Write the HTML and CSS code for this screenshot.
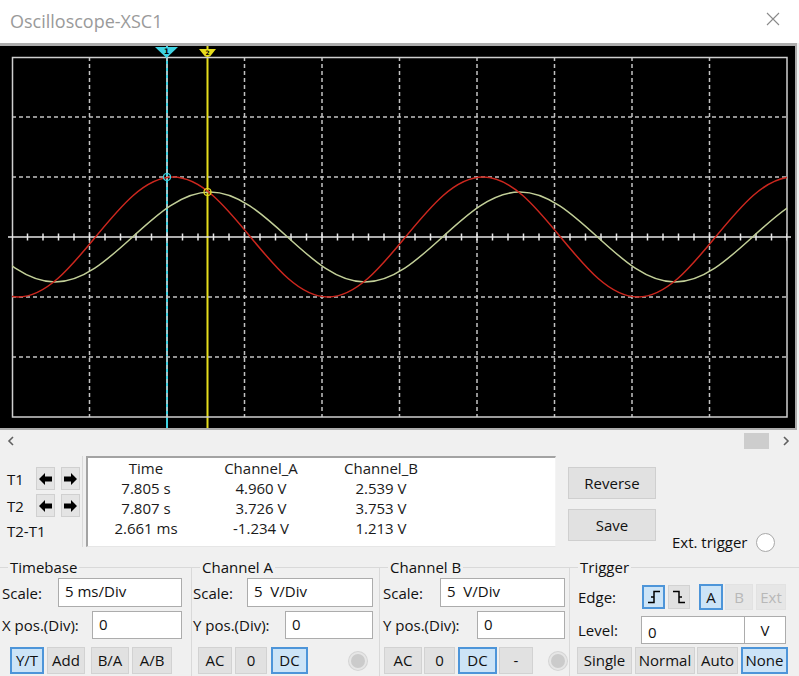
FILE: index.html
```html
<!DOCTYPE html>
<html>
<head>
<meta charset="utf-8">
<title>Oscilloscope-XSC1</title>
<link rel="stylesheet" href="styles.css">
</head>
<body>
<header class="titlebar">
  <span class="title">Oscilloscope-XSC1</span>
  <svg class="close" width="14" height="14" viewBox="0 0 14 14"><path d="M1 1L13 13M13 1L1 13" stroke="#8a8a8a" stroke-width="1.1" fill="none"/></svg>
</header>

<svg class="scope" width="799" height="387" viewBox="0 43 799 387">
  <defs><clipPath id="plot"><rect x="12" y="57" width="775" height="360"/></clipPath></defs>
  <rect x="0" y="43" width="799" height="387" fill="#f0f0f0"/>
  <rect x="0" y="43" width="797" height="3" fill="#adadad"/>
  <rect x="0" y="46" width="795" height="382" fill="#000"/>
  <rect x="795" y="43" width="2" height="387" fill="#adadad"/>
  <rect x="0" y="428" width="797" height="2" fill="#adadad"/>
  <line x1="167" y1="46" x2="167" y2="428" stroke="#3ed3e3" stroke-width="2"/>
  <line x1="207.5" y1="46" x2="207.5" y2="428" stroke="#e6dd1c" stroke-width="2"/>
  <g stroke="#c2c2c2" stroke-width="1.5" stroke-dasharray="4 3" fill="none">
    <path d="M89.5 57V417M167 57V417M244.5 57V417M322 57V417M399.5 57V417M477 57V417M554.5 57V417M632 57V417M709.5 57V417"/>
    <path d="M12 117H787M12 177H787M12 297H787M12 357H787"/>
  </g>
  <rect x="12.5" y="57.5" width="774.5" height="359.5" fill="none" stroke="#cfcfcf" stroke-width="1.5"/>
  <line x1="8" y1="237" x2="791" y2="237" stroke="#e6e6e6" stroke-width="1.6"/>
  <line x1="12" y1="237" x2="787" y2="237" stroke="#e6e6e6" stroke-width="7" stroke-dasharray="1.5 14" stroke-dashoffset="0.75"/>
  <g clip-path="url(#plot)" fill="none" stroke-width="1.5">
    <path stroke="#c2cf98" d="M-22.5,237 C2.78,260.05 26.95,282 55,282 C83.05,282 107.22,260.05 132.5,237 C157.78,213.95 181.95,192 210,192 C238.05,192 262.22,213.95 287.5,237 C312.78,260.05 336.95,282 365,282 C393.05,282 417.22,260.05 442.5,237 C467.78,213.95 491.95,192 520,192 C548.05,192 572.22,213.95 597.5,237 C622.78,260.05 646.95,282 675,282 C703.05,282 727.22,260.05 752.5,237 C777.78,213.95 801.95,192 830,192"/>
    <path stroke="#cc271e" d="M-59.5,237 C-34.22,267.74 -10.05,297 18,297 C46.05,297 70.22,267.74 95.5,237 C120.78,206.26 144.95,177 173,177 C201.05,177 225.22,206.26 250.5,237 C275.78,267.74 299.95,297 328,297 C356.05,297 380.22,267.74 405.5,237 C430.78,206.26 454.95,177 483,177 C511.05,177 535.22,206.26 560.5,237 C585.78,267.74 609.95,297 638,297 C666.05,297 690.22,267.74 715.5,237 C740.78,206.26 764.95,177 793,177"/>
  </g>
  <circle cx="167" cy="177" r="3.5" fill="none" stroke="#3ed3e3" stroke-width="1.2"/>
  <circle cx="207.5" cy="192" r="3.5" fill="none" stroke="#e6dd1c" stroke-width="1.2"/>
  <polygon points="155,47 178,47 166.5,58" fill="#3ed3e3"/>
  <text x="166.5" y="54" font-size="7.5" font-weight="bold" text-anchor="middle" fill="#000" font-family="DejaVu Sans, sans-serif">1</text>
  <polygon points="199,49 216,49 210,56.5 205,56.5" fill="#e6dd1c"/>
  <text x="207.5" y="55" font-size="6" font-weight="bold" text-anchor="middle" fill="#000" font-family="DejaVu Sans, sans-serif">2</text>
</svg>

<div class="scrollrow">
  <svg class="chev" width="8" height="10" viewBox="0 0 8 10"><path d="M6 1L2 5L6 9" stroke="#606060" stroke-width="1.6" fill="none"/></svg>
  <div class="spacer"></div>
  <div class="thumb"></div>
  <svg class="chev" width="8" height="10" viewBox="0 0 8 10"><path d="M2 1L6 5L2 9" stroke="#606060" stroke-width="1.6" fill="none"/></svg>
</div>

<div class="cursor-row">
  <div class="tcol">
    <div class="trow">
      <span class="tlabel">T1</span>
      <button class="arrow"><svg width="13" height="12" viewBox="0 0 13 12"><polygon points="0,6 6,0 6,3.5 13,3.5 13,8.5 6,8.5 6,12" fill="#000"/></svg></button>
      <button class="arrow gap"><svg width="13" height="12" viewBox="0 0 13 12"><polygon points="13,6 7,0 7,3.5 0,3.5 0,8.5 7,8.5 7,12" fill="#000"/></svg></button>
    </div>
    <div class="trow">
      <span class="tlabel">T2</span>
      <button class="arrow"><svg width="13" height="12" viewBox="0 0 13 12"><polygon points="0,6 6,0 6,3.5 13,3.5 13,8.5 6,8.5 6,12" fill="#000"/></svg></button>
      <button class="arrow gap"><svg width="13" height="12" viewBox="0 0 13 12"><polygon points="13,6 7,0 7,3.5 0,3.5 0,8.5 7,8.5 7,12" fill="#000"/></svg></button>
    </div>
    <div class="tdiff">T2-T1</div>
  </div>

  <div class="readout">
    <div class="rgrid">
      <span>Time</span><span>Channel_A</span><span>Channel_B</span>
      <span>7.805 s</span><span>4.960 V</span><span>2.539 V</span>
      <span>7.807 s</span><span>3.726 V</span><span>3.753 V</span>
      <span>2.661 ms</span><span>-1.234 V</span><span>1.213 V</span>
    </div>
  </div>

  <div class="actions">
    <button class="btn big">Reverse</button>
    <button class="btn big">Save</button>
  </div>

  <div class="ext">
    <span>Ext. trigger</span>
    <span class="radio-white"></span>
  </div>
</div>

<div class="groups">
  <fieldset class="group g-tb">
    <legend>Timebase</legend>
    <div class="frow r1"><span class="lab">Scale:</span><input class="field" type="text" value="5 ms/Div"></div>
    <div class="frow r2"><span class="lab">X pos.(Div):</span><input class="field" type="text" value="0"></div>
    <div class="frow r3">
      <button class="btn on b1">Y/T</button>
      <button class="btn b2">Add</button>
      <button class="btn b3">B/A</button>
      <button class="btn b4">A/B</button>
    </div>
  </fieldset>

  <fieldset class="group g-a">
    <legend>Channel A</legend>
    <div class="frow r1"><span class="lab">Scale:</span><input class="field" type="text" value="5  V/Div"></div>
    <div class="frow r2"><span class="lab">Y pos.(Div):</span><input class="field" type="text" value="0"></div>
    <div class="frow r3">
      <button class="btn b1">AC</button>
      <button class="btn b2">0</button>
      <button class="btn on b3">DC</button>
      <span class="radio-gray"></span>
    </div>
  </fieldset>

  <fieldset class="group g-b">
    <legend>Channel B</legend>
    <div class="frow r1"><span class="lab">Scale:</span><input class="field" type="text" value="5  V/Div"></div>
    <div class="frow r2"><span class="lab">Y pos.(Div):</span><input class="field" type="text" value="0"></div>
    <div class="frow r3">
      <button class="btn b1">AC</button>
      <button class="btn b2">0</button>
      <button class="btn on b3">DC</button>
      <button class="btn b4">-</button>
      <span class="radio-gray"></span>
    </div>
  </fieldset>

  <fieldset class="group g-tr">
    <legend>Trigger</legend>
    <div class="frow t1">
      <span class="lab">Edge:</span>
      <button class="btn on edge e1"><svg width="16" height="16" viewBox="0 0 16 16"><path d="M2 13.5H8V2.5H14M5 8H8" stroke="#000" stroke-width="1.5" fill="none"/></svg></button>
      <button class="btn edge e2"><svg width="16" height="16" viewBox="0 0 16 16"><path d="M2 2.5H8V13.5H14M8 8H11" stroke="#000" stroke-width="1.5" fill="none"/></svg></button>
      <button class="btn on src s1">A</button>
      <button class="btn off src s2">B</button>
      <button class="btn off src s3">Ext</button>
    </div>
    <div class="frow t2">
      <span class="lab">Level:</span>
      <input class="field level" type="text" value="0">
      <input class="field unit" type="text" value="V">
    </div>
    <div class="frow t3">
      <button class="btn m1">Single</button>
      <button class="btn m2">Normal</button>
      <button class="btn m3">Auto</button>
      <button class="btn on m4">None</button>
    </div>
  </fieldset>
</div>
</body>
</html>
```

FILE: styles.css
```css
* { box-sizing: border-box; }
html, body { margin: 0; padding: 0; }
body {
  width: 799px;
  height: 676px;
  overflow: hidden;
  background: #f0f0f0;
  font-family: "Open Sans", "Noto Sans", sans-serif;
  font-size: 15px;
  color: #111;
}

/* title bar */
.titlebar {
  height: 43px;
  background: #fff;
  display: flex;
  align-items: center;
  justify-content: space-between;
  padding: 0 19px 2px 10px;
}
.title { font-size: 18px; line-height: 24px; color: #9a9a9a; }
.close { display: block; margin-top: -3px; }

.scope { display: block; }

/* scroll bar */
.scrollrow {
  height: 22px;
  display: flex;
  align-items: center;
  padding: 0 9px 0 7px;
}
.chev { display: block; }
.spacer { flex: 1; }
.thumb { width: 25px; height: 16px; background: #cdcdcd; margin-right: 13px; }

/* generic buttons */
.btn {
  font: inherit;
  font-size: 15px;
  line-height: 1;
  color: #111;
  padding: 0;
  margin: 0;
  background: #e1e1e1;
  border: 1px solid #d2d2d2;
  display: flex;
  align-items: center;
  justify-content: center;
  height: 100%;
}
.btn.on { background: #cce4f7; border: 2px solid #4d95d9; }
.btn.off { background: #e6e6e6; border-color: #e2e2e2; color: #b8b8b8; }

/* cursor readout row */
.cursor-row {
  height: 105px;
  display: flex;
  align-items: flex-start;
}
.tcol {
  width: 83px;
  height: 91px;
  margin-top: 4px;
  padding-top: 11px;
  border-right: 1px solid #dadada;
}
.trow { display: flex; align-items: center; height: 23px; margin-bottom: 4px; }
.tlabel { width: 36px; padding-left: 7px; line-height: 20px; }
.arrow {
  width: 19px;
  height: 23px;
  padding: 0;
  background: #e4e4e4;
  border: 1px solid #d0d0d0;
  display: flex;
  align-items: center;
  justify-content: center;
}
.arrow.gap { margin-left: 6px; }
.tdiff { padding-left: 7px; margin-top: -1px; line-height: 22px; }

.readout {
  width: 470px;
  height: 91px;
  margin: 4px 0 0 3px;
  background: #fff;
  border-top: 2px solid #a3a3a3;
  border-left: 2px solid #a3a3a3;
  border-right: 1px solid #f4f4f4;
  border-bottom: 1px solid #e6e6e6;
}
.rgrid {
  display: grid;
  grid-template-columns: 116px 114px 126px;
  line-height: 20px;
  text-align: center;
  color: #1a1a1a;
}

.actions {
  width: 88px;
  margin: 15px 0 0 12px;
  display: flex;
  flex-direction: column;
  gap: 10px;
}
.btn.big { height: 32px; background: #e1e1e1; border: 1px solid #cfcfcf; }

.ext {
  margin: 79px 0 0 16px;
  height: 22px;
  display: flex;
  align-items: center;
  line-height: 22px;
}
.radio-white {
  width: 19px;
  height: 19px;
  margin-left: 9px;
  border-radius: 50%;
  background: #fff;
  border: 1px solid #a9a9a9;
}

/* bottom groups */
.groups { display: flex; height: 119px; overflow: hidden; }
.group {
  margin: 0;
  padding: 0;
  min-width: 0;
  border: 0;
  border-top: 1px solid #d9d9d9;
  border-left: 1px solid #d9d9d9;
  height: 140px;
}
.group legend {
  padding: 0 2px;
  margin-left: 8px;
  line-height: 20px;
  font-size: 15px;
}
.g-tb { width: 191px; border-left: 0; }
.g-a { width: 188px; }
.g-b { width: 190px; }
.g-tr { width: 230px; }

.frow { display: flex; align-items: center; }
.r1 { margin-top: 1px; height: 29px; }
.r2 { margin-top: 4px; height: 28px; }
.r3 { margin-top: 8px; height: 27px; }
.lab { white-space: nowrap; line-height: 20px; }

.field {
  font: inherit;
  font-size: 15px;
  color: #111;
  height: 100%;
  margin: 0;
  padding: 0 0 3px 6px;
  background: #fff;
  border: 1px solid #acacac;
  outline: none;
}

/* Timebase */
.g-tb .r1 .lab { margin-left: 2px; width: 56px; }
.g-tb .r1 .field { width: 124px; }
.g-tb .r2 .lab { margin-left: 2px; width: 90px; }
.g-tb .r2 .field { width: 90px; }
.g-tb .b1 { margin-left: 10px; width: 34px; }
.g-tb .b2 { margin-left: 3px; width: 38px; }
.g-tb .b3 { margin-left: 6px; width: 38px; }
.g-tb .b4 { margin-left: 3px; width: 40px; }

/* Channel A */
.g-a .r1 .lab { margin-left: 1px; width: 54px; }
.g-a .r1 .field { width: 126px; }
.g-a .r2 .lab { margin-left: 1px; width: 92px; }
.g-a .r2 .field { width: 88px; }
.g-a .b1 { margin-left: 6px; width: 34px; }
.g-a .b2 { margin-left: 3px; width: 32px; }
.g-a .b3 { margin-left: 4px; width: 37px; }
.g-a .radio-gray { margin-left: auto; margin-right: 12px; }

/* Channel B */
.g-b .r1 .lab { margin-left: 3px; width: 57px; }
.g-b .r1 .field { width: 125px; }
.g-b .r2 .lab { margin-left: 3px; width: 94px; }
.g-b .r2 .field { width: 88px; }
.g-b .b1 { margin-left: 4px; width: 38px; }
.g-b .b2 { margin-left: 2px; width: 31px; }
.g-b .b3 { margin-left: 3px; width: 39px; }
.g-b .b4 { margin-left: 2px; width: 34px; }
.g-b .radio-gray { margin-left: auto; margin-right: 2px; }

.radio-gray {
  width: 18px;
  height: 18px;
  border-radius: 50%;
  background: #cbcbcb;
  border: 2px solid #e6e6e6;
  box-shadow: 0 0 0 1px #d4d4d4;
}

/* Trigger */
.t1 { margin-top: 7px; height: 26px; }
.t2 { margin-top: 6px; height: 28px; }
.t3 { margin-top: 3px; height: 27px; }
.g-tr .t1 .lab { margin-left: 8px; width: 64px; }
.g-tr .t2 .lab { margin-left: 8px; width: 63px; }
.edge { height: 24px; }
.e1 { width: 23px; }
.e2 { width: 22px; margin-left: 3px; }
.src { height: 26px; }
.s1 { width: 24px; margin-left: 9px; }
.s2 { width: 28px; margin-left: 2px; }
.s3 { width: 30px; margin-left: 3px; }
.field.level { width: 104px; padding-top: 3px; padding-bottom: 0; }
.field.unit { width: 41px; text-align: center; padding: 0; border-left: 0; }
.m1 { margin-left: 7px; width: 55px; }
.m2 { margin-left: 3px; width: 60px; }
.m3 { margin-left: 2px; width: 41px; }
.m4 { margin-left: 3px; width: 47px; }
```
